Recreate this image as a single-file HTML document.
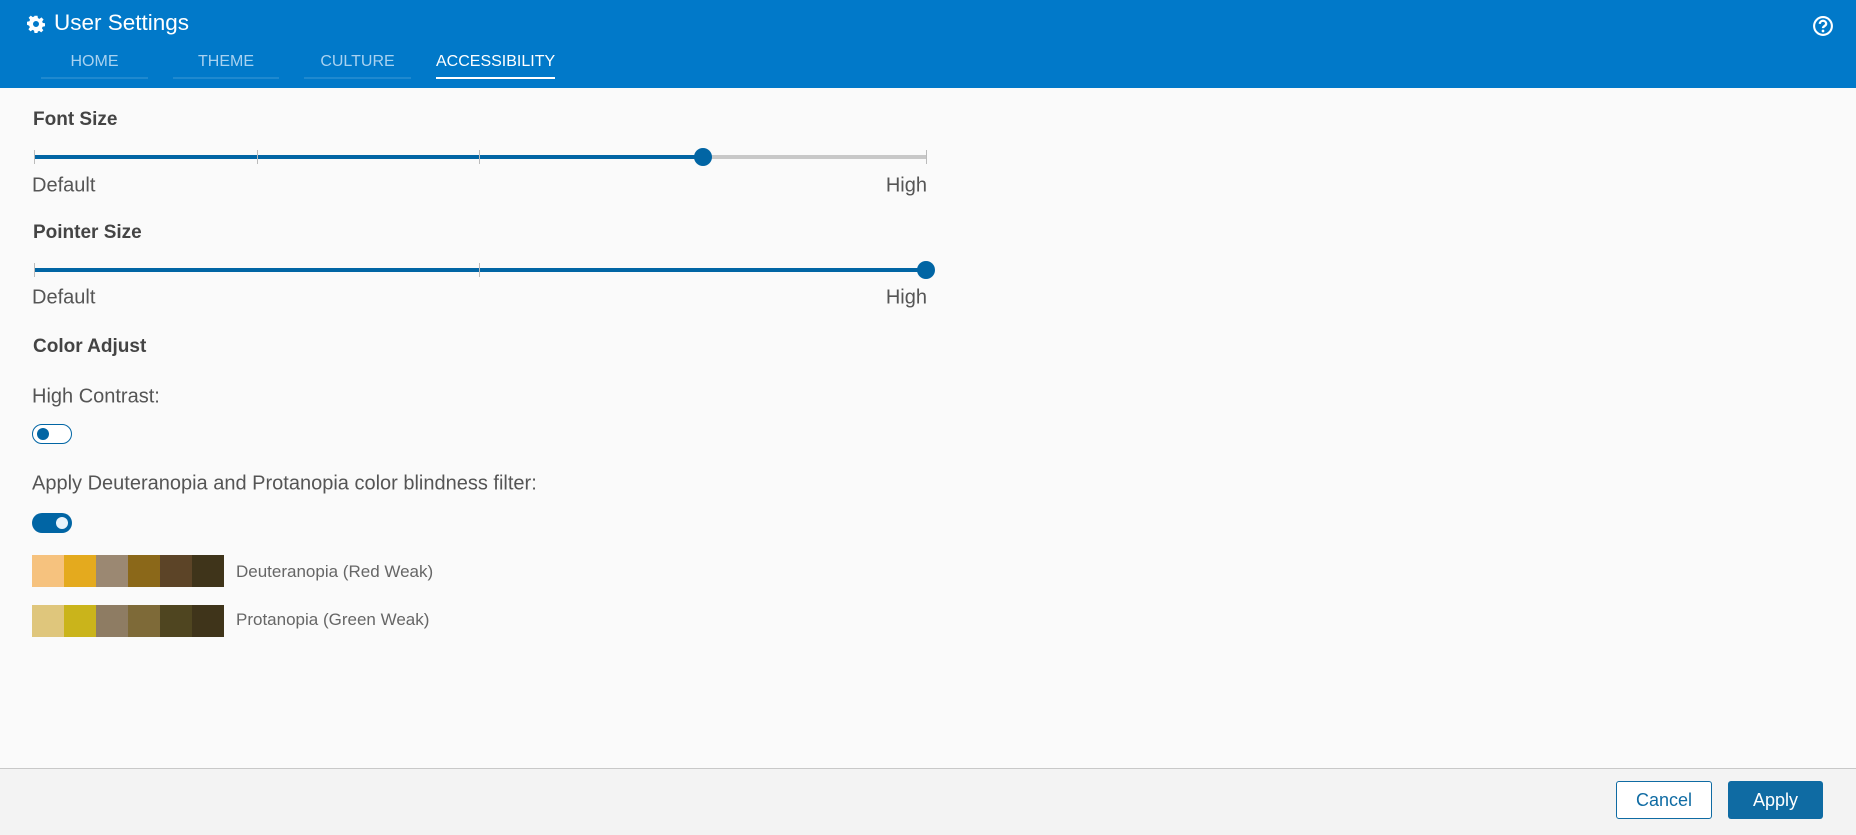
<!DOCTYPE html>
<html><head><meta charset="utf-8"><style>
body{margin:0;width:1856px;height:834px;background:#fafafa;font-family:"Liberation Sans",sans-serif;position:relative;overflow:hidden}
.a{position:absolute;white-space:nowrap}
.hdr{position:absolute;left:0;top:0;width:1856px;height:88px;background:#0179c9}
.tab{position:absolute;top:50px;height:27px;border-bottom:2px solid rgba(255,255,255,.12);color:#a9d2f0;font-size:16px;text-align:center;line-height:24px}
.lbl{font-size:19px;font-weight:bold;color:#444;transform:translateY(-50%)}
.sm{font-size:20px;color:#555;transform:translateY(-50%)}
.line{position:absolute;height:4px;background:#0165a4}
.tick{position:absolute;width:1px;height:14px;background:#bbb}
.knob{position:absolute;width:18px;height:18px;border-radius:50%;background:#0165a4}
.sw{position:absolute;width:32px;height:32px}
.swl{font-size:17px;color:#666;transform:translateY(-50%)}
</style></head><body>
<div class="hdr"></div>
<svg class="a" style="left:27px;top:15px" width="18" height="18" viewBox="0 0 24 24"><path fill="#fff" d="M10 1h4l.6 3.2 2 .9 2.7-1.9 2.8 2.8-1.9 2.7.9 2L24 11v4l-3.2.6-.9 2 1.9 2.7-2.8 2.8-2.7-1.9-2 .9L14 24h-4l-.6-3.2-2-.9-2.7 1.9-2.8-2.8 1.9-2.7-.9-2L0 13V9l3.2-.6.9-2L2.2 3.7 5 .9l2.7 1.9 2-.9z M12 8a4 4 0 100 8 4 4 0 000-8z" fill-rule="evenodd"/></svg>
<div class="a" style="left:54px;top:10px;color:#fff;font-size:22.5px">User Settings</div>
<svg class="a" style="left:1812px;top:15px" width="22" height="22" viewBox="0 0 21 21"><circle cx="10.5" cy="10.5" r="8.5" fill="none" stroke="#fff" stroke-width="2"/><path d="M7.5 8.5a3 3 0 016 0c0 2-3 2-3 4" fill="none" stroke="#fff" stroke-width="2.2"/><circle cx="10.5" cy="15.3" r="1.3" fill="#fff"/></svg>
<div class="tab" style="left:41px;width:107px">HOME</div>
<div class="tab" style="left:173px;width:106px">THEME</div>
<div class="tab" style="left:304px;width:107px">CULTURE</div>
<div class="tab" style="left:436px;width:119px;color:#fff;border-bottom-color:#fff">ACCESSIBILITY</div>

<div class="a lbl" style="left:33px;top:120px">Font Size</div>
<div class="a" style="left:34px;top:155px;width:892px;height:4px;background:#c8c8c8"></div>
<div class="line" style="left:34px;top:155px;width:669px"></div>
<div class="tick" style="left:34px;top:150px"></div><div class="tick" style="left:257px;top:150px"></div><div class="tick" style="left:479px;top:150px"></div><div class="tick" style="left:926px;top:150px"></div>
<div class="knob" style="left:694px;top:148px"></div>
<div class="a sm" style="left:32px;top:186px">Default</div>
<div class="a sm" style="right:929px;top:186px">High</div>

<div class="a lbl" style="left:33px;top:233px">Pointer Size</div>
<div class="line" style="left:34px;top:268px;width:892px"></div>
<div class="tick" style="left:34px;top:263px"></div><div class="tick" style="left:479px;top:263px"></div>
<div class="knob" style="left:917px;top:261px"></div>
<div class="a sm" style="left:32px;top:298px">Default</div>
<div class="a sm" style="right:929px;top:298px">High</div>

<div class="a lbl" style="left:33px;top:347px">Color Adjust</div>
<div class="a sm" style="left:32px;top:397px">High Contrast:</div>
<div class="a" style="left:32px;top:424px;width:40px;height:20px;box-sizing:border-box;border:1.5px solid #0165a4;border-radius:10px;background:#fff"></div>
<div class="a" style="left:37px;top:428px;width:12px;height:12px;border-radius:50%;background:#0165a4"></div>
<div class="a sm" style="left:32px;top:484px">Apply Deuteranopia and Protanopia color blindness filter:</div>
<div class="a" style="left:32px;top:513px;width:40px;height:20px;border-radius:10px;background:#0165a4"></div>
<div class="a" style="left:56px;top:517px;width:12px;height:12px;border-radius:50%;background:#e8f4fb"></div>

<div class="sw" style="left:32px;top:555px;background:#f6c27e"></div><div class="sw" style="left:64px;top:555px;background:#e4aa1e"></div><div class="sw" style="left:96px;top:555px;background:#9b8872"></div><div class="sw" style="left:128px;top:555px;background:#8b6819"></div><div class="sw" style="left:160px;top:555px;background:#5c4427"></div><div class="sw" style="left:192px;top:555px;background:#3f341a"></div>
<div class="a swl" style="left:236px;top:572px">Deuteranopia (Red Weak)</div>
<div class="sw" style="left:32px;top:605px;background:#dfc67c"></div><div class="sw" style="left:64px;top:605px;background:#cab41b"></div><div class="sw" style="left:96px;top:605px;background:#8e7c63"></div><div class="sw" style="left:128px;top:605px;background:#7e6a38"></div><div class="sw" style="left:160px;top:605px;background:#4f4520"></div><div class="sw" style="left:192px;top:605px;background:#3f341a"></div>
<div class="a swl" style="left:236px;top:620px">Protanopia (Green Weak)</div>

<div class="a" style="left:0;top:768px;width:1856px;height:66px;background:#f3f3f3;border-top:1px solid #c8c8c8"></div>
<div class="a" style="left:1616px;top:781px;width:96px;height:38px;box-sizing:border-box;border:1px solid #0f6ba3;border-radius:3px;background:#fff;color:#0f6ba3;font-size:18px;text-align:center;line-height:36px">Cancel</div>
<div class="a" style="left:1728px;top:781px;width:95px;height:38px;border-radius:3px;background:#0f6ba3;color:#fff;font-size:18px;text-align:center;line-height:38px">Apply</div>
</body></html>
